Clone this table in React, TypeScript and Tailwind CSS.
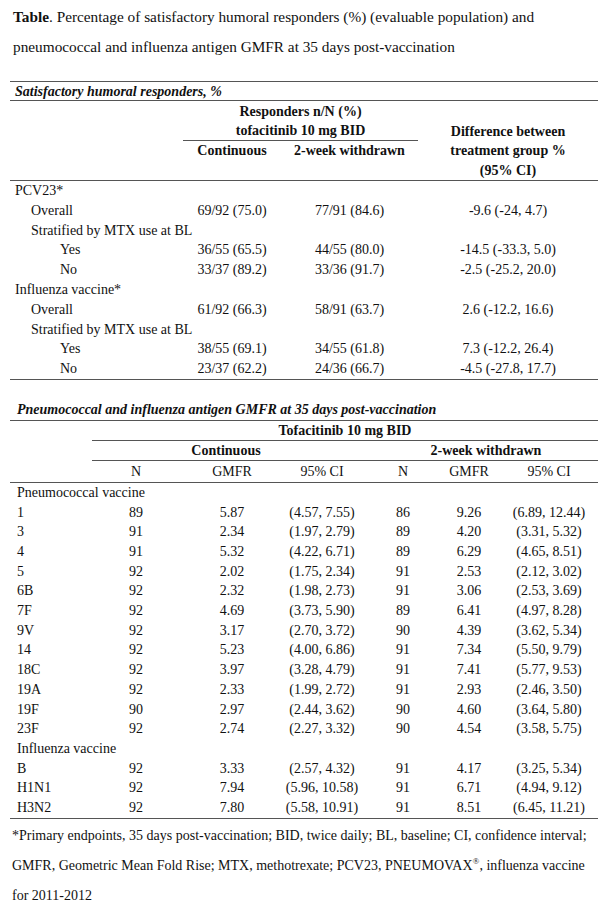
import React from "react";

type R1 = { label: string; level: 0 | 1 | 2; a?: string; b?: string; c?: string };

const rows1: R1[] = [
  { label: "PCV23*", level: 0 },
  { label: "Overall", level: 1, a: "69/92 (75.0)", b: "77/91 (84.6)", c: "-9.6 (-24, 4.7)" },
  { label: "Stratified by MTX use at BL", level: 1 },
  { label: "Yes", level: 2, a: "36/55 (65.5)", b: "44/55 (80.0)", c: "-14.5 (-33.3, 5.0)" },
  { label: "No", level: 2, a: "33/37 (89.2)", b: "33/36 (91.7)", c: "-2.5 (-25.2, 20.0)" },
  { label: "Influenza vaccine*", level: 0 },
  { label: "Overall", level: 1, a: "61/92 (66.3)", b: "58/91 (63.7)", c: "2.6 (-12.2, 16.6)" },
  { label: "Stratified by MTX use at BL", level: 1 },
  { label: "Yes", level: 2, a: "38/55 (69.1)", b: "34/55 (61.8)", c: "7.3 (-12.2, 26.4)" },
  { label: "No", level: 2, a: "23/37 (62.2)", b: "24/36 (66.7)", c: "-4.5 (-27.8, 17.7)" },
];

const rows2: string[][] = [
  ["Pneumococcal vaccine"],
  ["1", "89", "5.87", "(4.57, 7.55)", "86", "9.26", "(6.89, 12.44)"],
  ["3", "91", "2.34", "(1.97, 2.79)", "89", "4.20", "(3.31, 5.32)"],
  ["4", "91", "5.32", "(4.22, 6.71)", "89", "6.29", "(4.65, 8.51)"],
  ["5", "92", "2.02", "(1.75, 2.34)", "91", "2.53", "(2.12, 3.02)"],
  ["6B", "92", "2.32", "(1.98, 2.73)", "91", "3.06", "(2.53, 3.69)"],
  ["7F", "92", "4.69", "(3.73, 5.90)", "89", "6.41", "(4.97, 8.28)"],
  ["9V", "92", "3.17", "(2.70, 3.72)", "90", "4.39", "(3.62, 5.34)"],
  ["14", "92", "5.23", "(4.00, 6.86)", "91", "7.34", "(5.50, 9.79)"],
  ["18C", "92", "3.97", "(3.28, 4.79)", "91", "7.41", "(5.77, 9.53)"],
  ["19A", "92", "2.33", "(1.99, 2.72)", "91", "2.93", "(2.46, 3.50)"],
  ["19F", "90", "2.97", "(2.44, 3.62)", "90", "4.60", "(3.64, 5.80)"],
  ["23F", "92", "2.74", "(2.27, 3.32)", "90", "4.54", "(3.58, 5.75)"],
  ["Influenza vaccine"],
  ["B", "92", "3.33", "(2.57, 4.32)", "91", "4.17", "(3.25, 5.34)"],
  ["H1N1", "92", "7.94", "(5.96, 10.58)", "91", "6.71", "(4.94, 9.12)"],
  ["H3N2", "92", "7.80", "(5.58, 10.91)", "91", "8.51", "(6.45, 11.21)"],
];

const indent = ["pl-[5px]", "pl-[21px]", "pl-[50px]"];

export default function App() {
  return (
    <div className="w-[611px] h-[915px] bg-white text-[#111] font-['Liberation_Serif','Times_New_Roman',serif] text-[14px] overflow-hidden">
      {/* Title */}
      <div className="pl-[13px] pt-[2px] text-[15.3px] leading-[30px] whitespace-nowrap">
        <span className="font-bold">Table</span>. Percentage of satisfactory humoral responders (%) (evaluable population) and
        <br />
        pneumococcal and influenza antigen GMFR at 35 days post-vaccination
      </div>

      {/* Table 1 */}
      <div className="ml-[10px] mt-[19px] w-[588px] border-t border-[#555]">
        <div className="h-[19px] leading-[19px] pl-[5px] font-bold italic border-b border-[#555]">
          Satisfactory humoral responders, %
        </div>
        <div className="flex h-[80px] border-b border-[#555] font-bold">
          <div className="w-[173px]" />
          <div className="w-[235px] flex flex-col">
            <div className="h-[20px] leading-[20px] pt-[1px] text-center">Responders n/N (%)</div>
            <div className="h-[20px] leading-[20px] text-center border-b border-[#555]">tofacitinib 10 mg BID</div>
            <div className="flex h-[20px] leading-[20px]">
              <div className="w-[98px] text-center">Continuous</div>
              <div className="w-[137px] text-center">2-week withdrawn</div>
            </div>
          </div>
          <div className="w-[180px] flex flex-col justify-end text-center leading-[19.5px]">
            <div>Difference between</div>
            <div>treatment group %</div>
            <div>(95% CI)</div>
          </div>
        </div>
        <div className="border-b border-[#555]">
          {rows1.map((r, i) => (
            <div key={i} className="flex h-[19.8px] leading-[19.8px] whitespace-nowrap">
              <div className={`w-[173px] ${indent[r.level]}`}>{r.label}</div>
              <div className="w-[98px] text-center">{r.a ?? ""}</div>
              <div className="w-[137px] text-center">{r.b ?? ""}</div>
              <div className="w-[180px] text-center">{r.c ?? ""}</div>
            </div>
          ))}
        </div>
      </div>

      {/* Table 2 title */}
      <div className="ml-[10px] mt-[19px] h-[21px] leading-[21px] pl-[7px] font-bold italic whitespace-nowrap">
        Pneumococcal and influenza antigen GMFR at 35 days post-vaccination
      </div>

      {/* Table 2 */}
      <div className="ml-[10px] w-[588px] border-t border-[#555]">
        <div className="flex border-b border-[#555]">
          <div className="w-[82px]" />
          <div className="w-[506px] flex flex-col">
            <div className="h-[20px] leading-[20px] text-center font-bold border-b border-[#555]">
              Tofacitinib 10 mg BID
            </div>
            <div className="flex h-[20px] leading-[20px] font-bold border-b border-[#555]">
              <div className="w-[268px] text-center">Continuous</div>
              <div className="w-[238px] text-center pl-[14px]">2-week withdrawn</div>
            </div>
            <div className="flex h-[21px] leading-[21px]">
              <div className="w-[88px] text-center">N</div>
              <div className="w-[104px] text-center">GMFR</div>
              <div className="w-[76px] text-center">95% CI</div>
              <div className="w-[86px] text-center">N</div>
              <div className="w-[46px] text-center">GMFR</div>
              <div className="w-[106px] text-center pl-[8px]">95% CI</div>
            </div>
          </div>
        </div>
        <div className="border-b border-[#555]">
          {rows2.map((r, i) =>
            r.length === 1 ? (
              <div key={i} className="h-[19.7px] leading-[19.7px] pl-[7px] whitespace-nowrap">
                {r[0]}
              </div>
            ) : (
              <div key={i} className="flex h-[19.7px] leading-[19.7px] whitespace-nowrap">
                <div className="w-[82px] pl-[7px]">{r[0]}</div>
                <div className="w-[88px] text-center">{r[1]}</div>
                <div className="w-[104px] text-center">{r[2]}</div>
                <div className="w-[76px] text-center">{r[3]}</div>
                <div className="w-[86px] text-center">{r[4]}</div>
                <div className="w-[46px] text-center">{r[5]}</div>
                <div className="w-[106px] text-center pl-[8px]">{r[6]}</div>
              </div>
            )
          )}
        </div>
      </div>

      {/* Footnote */}
      <div className="pl-[12px] pt-[2px] leading-[30px] whitespace-nowrap">
        *Primary endpoints, 35 days post-vaccination; BID, twice daily; BL, baseline; CI, confidence interval;
        <br />
        GMFR, Geometric Mean Fold Rise; MTX, methotrexate; PCV23, PNEUMOVAX<span className="relative -top-[6px] text-[9px] leading-none">®</span>, influenza vaccine
        <br />
        for 2011-2012
      </div>
    </div>
  );
}
